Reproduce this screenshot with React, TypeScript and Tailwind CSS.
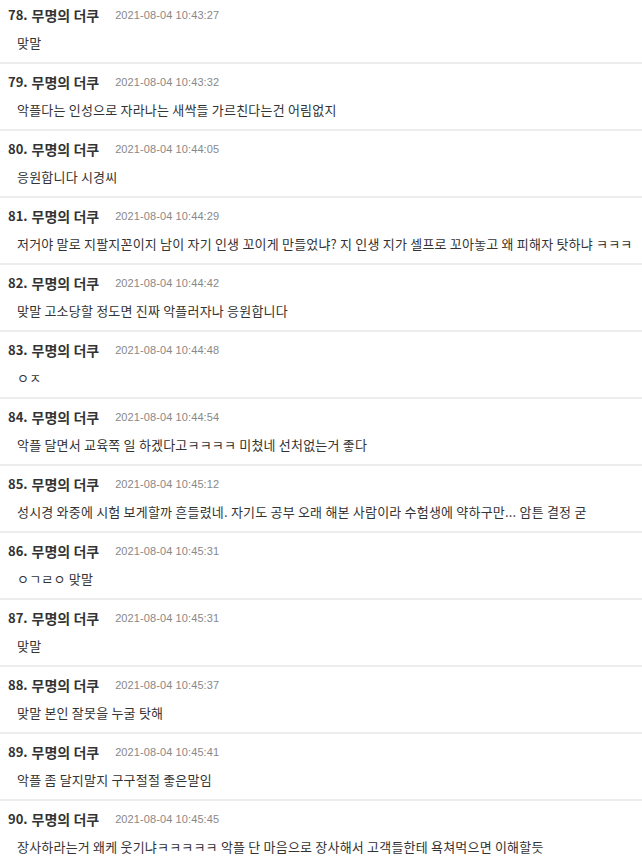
import React from 'react';

type Comment = {
  no: number;
  date: string;
  body: string;
};

const comments: Comment[] = [
  { no: 78, date: '2021-08-04 10:43:27', body: '맞말' },
  { no: 79, date: '2021-08-04 10:43:32', body: '악플다는 인성으로 자라나는 새싹들 가르친다는건 어림없지' },
  { no: 80, date: '2021-08-04 10:44:05', body: '응원합니다 시경씨' },
  {
    no: 81,
    date: '2021-08-04 10:44:29',
    body: '저거야 말로 지팔지꼰이지 남이 자기 인생 꼬이게 만들었냐? 지 인생 지가 셀프로 꼬아놓고 왜 피해자 탓하냐 ㅋㅋㅋ',
  },
  { no: 82, date: '2021-08-04 10:44:42', body: '맞말 고소당할 정도면 진짜 악플러자나 응원합니다' },
  { no: 83, date: '2021-08-04 10:44:48', body: 'ㅇㅈ' },
  { no: 84, date: '2021-08-04 10:44:54', body: '악플 달면서 교육쪽 일 하겠다고ㅋㅋㅋㅋ 미쳤네 선처없는거 좋다' },
  {
    no: 85,
    date: '2021-08-04 10:45:12',
    body: '성시경 와중에 시험 보게할까 흔들렸네. 자기도 공부 오래 해본 사람이라 수험생에 약하구만... 암튼 결정 굳',
  },
  { no: 86, date: '2021-08-04 10:45:31', body: 'ㅇㄱㄹㅇ 맞말' },
  { no: 87, date: '2021-08-04 10:45:31', body: '맞말' },
  { no: 88, date: '2021-08-04 10:45:37', body: '맞말 본인 잘못을 누굴 탓해' },
  { no: 89, date: '2021-08-04 10:45:41', body: '악플 좀 달지말지 구구절절 좋은말임' },
  {
    no: 90,
    date: '2021-08-04 10:45:45',
    body: '장사하라는거 왜케 웃기냐ㅋㅋㅋㅋㅋ 악플 단 마음으로 장사해서 고객들한테 욕쳐먹으면 이해할듯',
  },
];

const kr = "font-['Noto_Sans_CJK_KR',sans-serif]";

const CommentItem = ({ c, first }: { c: Comment; first: boolean }) => {
  return (
    <div className={first ? 'pt-[5px] pb-[9px]' : 'border-t-2 border-[#ececec] pt-2 pb-[9px]'}>
      <div className="flex items-center h-5 pl-2">
        <span className={`${kr} text-[13px] font-bold text-[#333] leading-5`}>{c.no}.</span>
        <span className={`${kr} ml-[4px] text-[14px] font-bold text-[#333] leading-5`}>무명의 더쿠</span>
        <span className="ml-[16px] font-['Liberation_Sans',sans-serif] text-[11px] tracking-[0.1px] text-[#888] leading-5">
          {c.date}
        </span>
      </div>
      <div className={`${kr} mt-2 pl-[17px] text-[13px] tracking-[0.2px] text-[#333] leading-5 whitespace-nowrap`}>
        {c.body}
      </div>
    </div>
  );
};

export default function App() {
  return (
    <div className="w-[642px] h-[861px] overflow-hidden bg-white">
      {comments.map((c, i) => (
        <CommentItem key={c.no} c={c} first={i === 0} />
      ))}
    </div>
  );
}
